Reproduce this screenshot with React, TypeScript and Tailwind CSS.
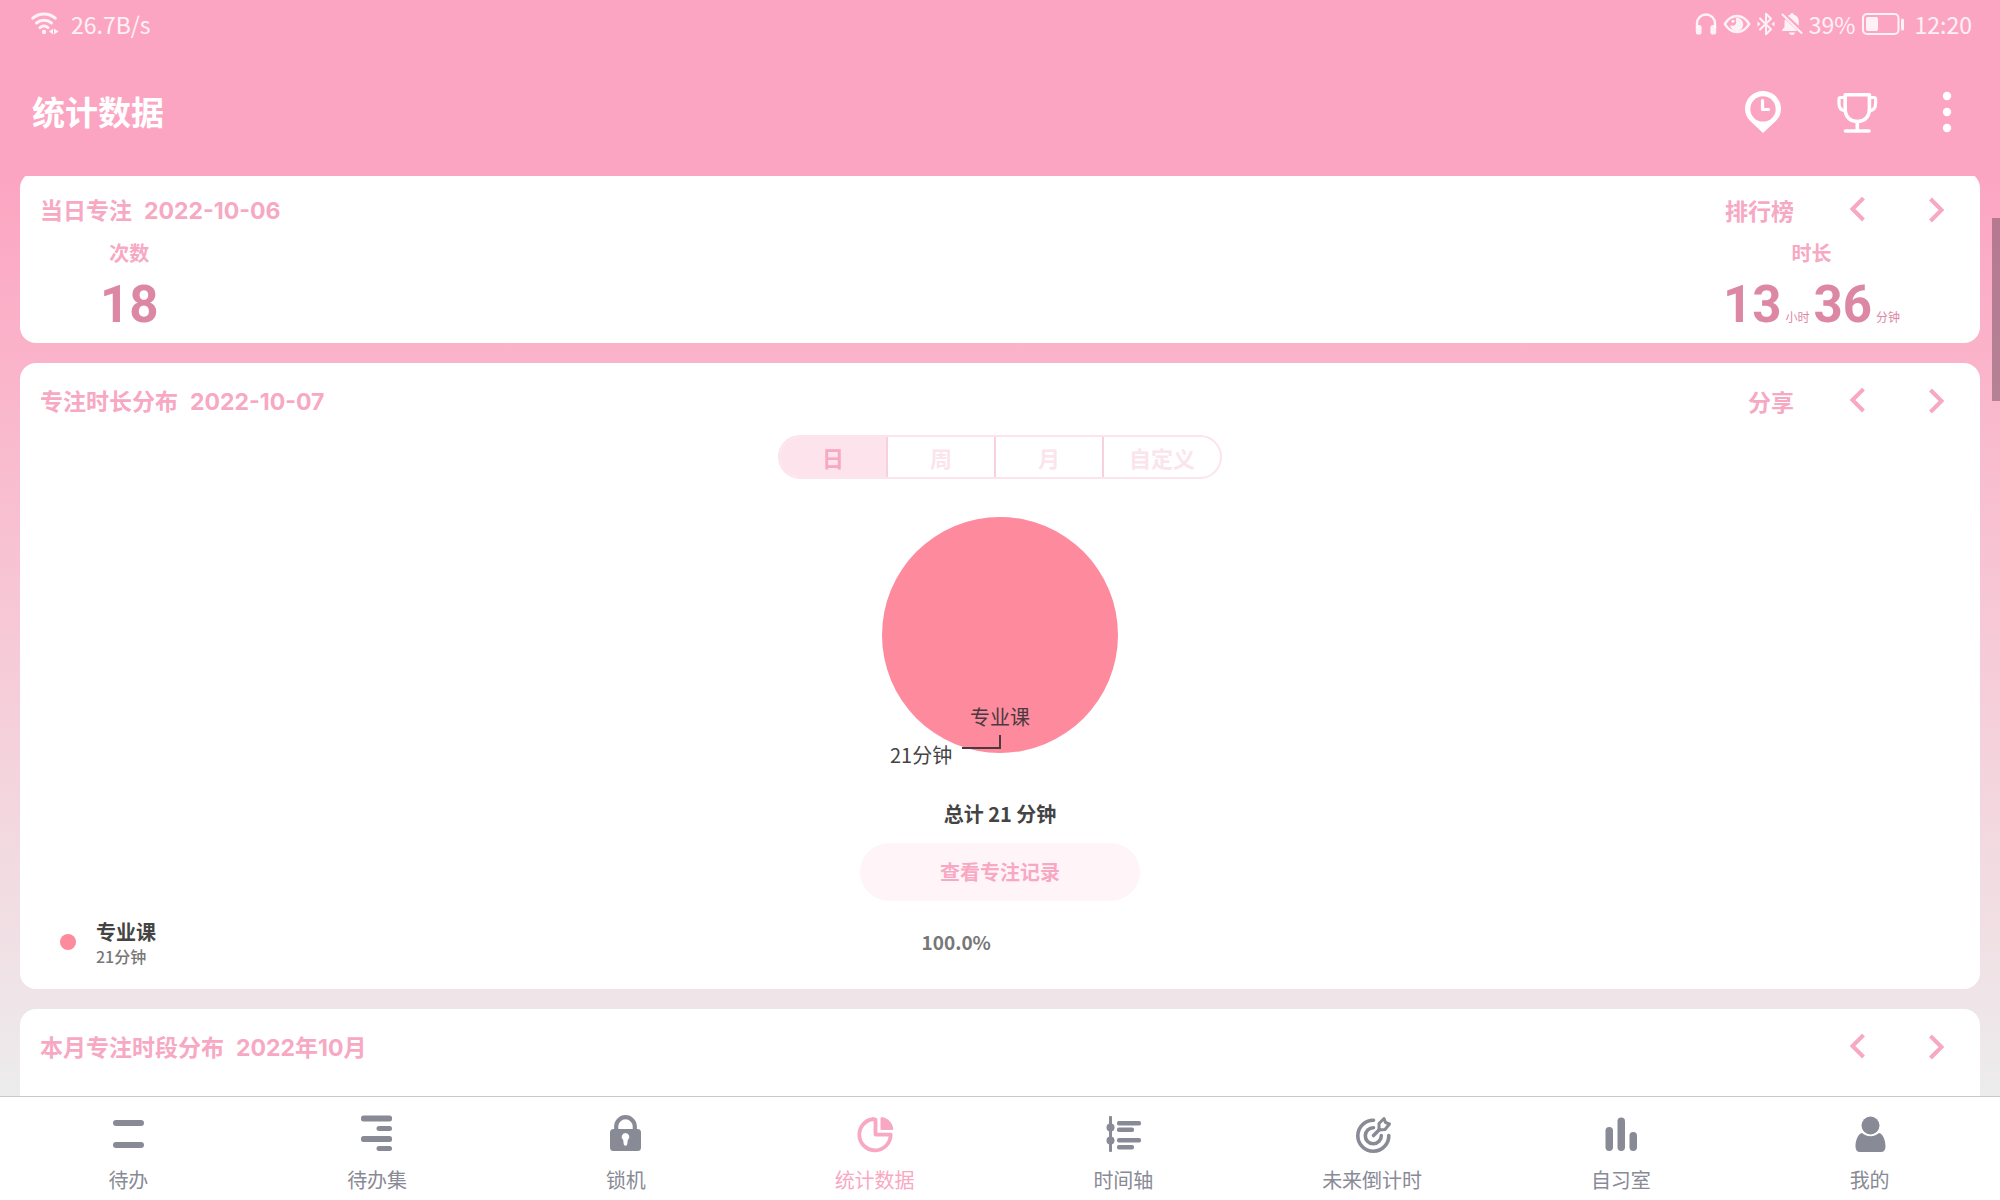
import type { ReactNode } from "react";

function WifiIcon() {
  return (
    <svg width="28" height="24" viewBox="0 0 28 24" fill="none" stroke="currentColor" strokeWidth="3" strokeLinecap="round" aria-hidden="true">
      <path d="M1.800 6.200C8.500 0.700 17.500 0.700 24.200 6.200" />
      <path d="M5.500 11C10 7.300 16 7.300 20.500 11" />
      <path d="M9 15.600C11.500 13.600 14.500 13.600 17 15.600" />
      <circle cx="13" cy="20" r="2.200" fill="currentColor" stroke="none" />
      <path d="M18 19.500l4-3v6zM23 16.500l4.500 3-4.500 3z" fill="currentColor" stroke="none" />
    </svg>
  );
}

function HeadphonesIcon() {
  return (
    <svg width="22" height="24" viewBox="0 0 22 24" aria-hidden="true">
      <path d="M2 16v-4.500a9 9 0 0 1 18 0V16" fill="none" stroke="currentColor" strokeWidth="2.400" />
      <rect x="0.800" y="13" width="5.800" height="9.500" rx="2.600" fill="currentColor" />
      <rect x="15.400" y="13" width="5.800" height="9.500" rx="2.600" fill="currentColor" />
    </svg>
  );
}

function EyeIcon() {
  return (
    <svg width="28" height="24" viewBox="0 0 28 24" aria-hidden="true">
      <path d="M1.800 12C5 6.800 9 4 14 4s9 2.800 12.200 8C23 17.200 19 20 14 20S5 17.200 1.800 12z" fill="none" stroke="currentColor" strokeWidth="2.400" strokeLinejoin="round" />
      <path d="M13 5.800a6.600 6.600 0 1 1-5.900 7.300c2 1.500 5.600.4 6-2.200.2-1.700-.6-3-.1-5.100z" fill="currentColor" />
      <circle cx="10" cy="9.200" r="1.500" fill="currentColor" />
    </svg>
  );
}

function BluetoothIcon() {
  return (
    <svg width="18" height="24" viewBox="0 0 18 24" aria-hidden="true">
      <path d="M3 6.500l11 10.800-5 5V1.700l5 5L3 17.500" fill="none" stroke="currentColor" strokeWidth="2" strokeLinejoin="round" strokeLinecap="round" />
      <path d="M.5 9.500L3.500 12l-3 2.500zM17.500 9.500L14.500 12l3 2.500z" fill="currentColor" />
    </svg>
  );
}

function BellOffIcon() {
  return (
    <svg width="22" height="24" viewBox="0 0 22 24" aria-hidden="true">
      <path d="M4.200 7.200L16.500 19H1.800c-.8 0-1-.8-.5-1.300l2.200-2.600V10c0-1 .3-2 .7-2.800zM7 3.800c.7-.5 1.500-.9 2.300-1C9.500 1.800 10 1 11 1s1.600.8 1.800 1.800c3 .7 5 3.300 5 6.700v4.300z" fill="currentColor" />
      <path d="M8 20.500h6c0 1.500-1.400 2.500-3 2.500s-3-1-3-2.500z" fill="currentColor" />
      <path d="M1.500 2.500l19 18.500" stroke="currentColor" strokeWidth="2" strokeLinecap="round" />
    </svg>
  );
}

function BatteryIcon() {
  return (
    <svg width="43" height="24" viewBox="0 0 43 24" aria-hidden="true">
      <rect x="1" y="2" width="35.500" height="20" rx="4" fill="none" stroke="currentColor" strokeWidth="2" />
      <rect x="4" y="5" width="12" height="14" rx="2" fill="currentColor" />
      <rect x="39" y="6.500" width="3" height="12" rx="1.500" fill="currentColor" />
    </svg>
  );
}

function FocusPinIcon() {
  return (
    <svg width="44" height="44" viewBox="0 0 44 44" aria-hidden="true">
      <path fillRule="evenodd" d="M22 1C12 1 4 9 4 18.800c0 5 2 9 5.200 12.200L22 43l12.800-12C38 27.800 40 23.800 40 18.800 40 9 32 1 22 1zm0 5.200a12.700 12.700 0 1 1 0 25.400 12.700 12.700 0 0 1 0-25.400z" fill="currentColor" />
      <path d="M21.500 10.500v9h6" fill="none" stroke="currentColor" strokeWidth="3.200" strokeLinecap="round" strokeLinejoin="round" />
    </svg>
  );
}

function TrophyIcon() {
  return (
    <svg width="44" height="44" viewBox="0 0 44 44" fill="none" stroke="currentColor" strokeWidth="3.600" strokeLinecap="round" strokeLinejoin="round" aria-hidden="true">
      <path d="M9.200 4.800h24.200v14.500c0 7.500-5 12.200-12.100 12.200s-12.100-4.700-12.100-12.200z" />
      <path d="M9.200 7.500H4.800c-1 0-1.800.8-1.800 1.800v4c0 4.500 2 7.200 6.200 7.500M33.400 7.500h4.400c1 0 1.800.8 1.800 1.800v4c0 4.500-2 7.200-6.200 7.500" strokeWidth="3.200" />
      <path d="M21.300 31.500V41M9.500 41h23.500" />
    </svg>
  );
}

function MoreIcon() {
  return (
    <svg width="12" height="44" viewBox="0 0 12 44" fill="currentColor" aria-hidden="true">
      <circle cx="6" cy="6" r="4.200" />
      <circle cx="6" cy="22" r="4.200" />
      <circle cx="6" cy="38" r="4.200" />
    </svg>
  );
}

function Chevron({ direction }: { direction: "left" | "right" }) {
  return (
    <svg width="16" height="26" viewBox="0 0 16 26" fill="none" stroke="currentColor" strokeWidth="4" aria-hidden="true">
      {direction === "left" ? <path d="M14.500 1L3.500 12 14.500 23" /> : <path d="M1.500 2L12.500 13 1.500 24" />}
    </svg>
  );
}

const navIcons: Record<string, ReactNode> = {
  待办: (
    <g fill="currentColor">
      <rect x="5" y="5" width="31" height="6" rx="3" />
      <rect x="5" y="27" width="31" height="6" rx="3" />
    </g>
  ),
  待办集: (
    <g fill="currentColor">
      <rect x="4" y="0.500" width="31" height="6" rx="2.500" />
      <rect x="19.500" y="11" width="15.500" height="5" rx="2.500" />
      <rect x="4" y="21" width="31" height="6" rx="2.500" />
      <rect x="19.500" y="31" width="15.500" height="5" rx="2.500" />
    </g>
  ),
  锁机: (
    <g>
      <path d="M10.200 16v-4.500a9.300 9.300 0 0 1 18.600 0V16" fill="none" stroke="currentColor" strokeWidth="4.200" />
      <path fillRule="evenodd" d="M7.500 14h24a3.500 3.500 0 0 1 3.500 3.500v15a3.500 3.500 0 0 1-3.500 3.500h-24A3.500 3.500 0 0 1 4 32.500v-15A3.500 3.500 0 0 1 7.500 14zm12 4a3.900 3.900 0 0 0-2.300 7l.5 4a1.800 1.800 0 0 0 3.600 0l.5-4a3.900 3.900 0 0 0-2.300-7z" fill="currentColor" />
    </g>
  ),
  统计数据: (
    <g>
      <path d="M18.500 4a15.700 15.700 0 1 0 17.200 15.600H20.500V4.500z" fill="none" stroke="currentColor" strokeWidth="3.800" strokeLinejoin="round" />
      <path d="M25.500 3.500a1.500 1.500 0 0 1 1.500-1.500C33 3 37.300 7.500 38.200 13.500c0 1-.5 1.500-1.200 1.500H26.500a1 1 0 0 1-1-1z" fill="currentColor" />
    </g>
  ),
  时间轴: (
    <g fill="currentColor">
      <rect x="6" y="1" width="3" height="36" rx="1" />
      <circle cx="7.500" cy="12.500" r="4" />
      <circle cx="7.500" cy="25.500" r="4" />
      <rect x="14" y="6" width="24" height="4.500" rx="1.800" />
      <rect x="14" y="12.500" width="17" height="4.500" rx="1.800" />
      <rect x="14" y="23" width="24" height="4.500" rx="1.800" />
      <rect x="14" y="30" width="17" height="4.500" rx="1.800" />
    </g>
  ),
  未来倒计时: (
    <g fill="none" stroke="currentColor" strokeWidth="3.600" strokeLinecap="round" strokeLinejoin="round">
      <path d="M21.500 5.300a15.500 15.500 0 1 0 15.300 15.200" />
      <path d="M21.500 12.800a8 8 0 1 0 7.800 7.800" />
      <path d="M21.500 20.500l6-6" />
      <path d="M27 15v-6.500l5-5 1.500 4 4 1.500-4.500 5.500z" strokeWidth="3" />
    </g>
  ),
  自习室: (
    <g fill="currentColor">
      <rect x="4.500" y="12" width="7.500" height="24" rx="3.700" />
      <rect x="16.500" y="2.500" width="7.500" height="33.500" rx="3.700" />
      <rect x="28.500" y="17" width="7.500" height="19" rx="3.700" />
    </g>
  ),
  我的: (
    <g fill="currentColor">
      <path d="M12 18c2.200 2 5 3.200 8.500 3.200s6.300-1.200 8.500-3.200C33 19 35.500 25 35.500 31.500c0 3.500-1.500 5.500-4.500 5.500H10C7 37 5.500 35 5.500 31.500 5.500 25 8 19 12 18z" />
      <circle cx="20.500" cy="10.500" r="9" />
    </g>
  ),
};

const tabs = ["待办", "待办集", "锁机", "统计数据", "时间轴", "未来倒计时", "自习室", "我的"];
const ranges = ["日", "周", "月", "自定义"];

function CardHeader({ title, date, action }: { title: string; date: string; action?: string }) {
  return (
    <div className="flex h-8 items-center justify-between pr-[35px] pl-5 text-[23px] font-bold text-[#f7a8c3]">
      <h2>
        {title}
        <span className="ml-3 font-[Inter,'Noto_Sans_CJK_SC',sans-serif]">{date}</span>
      </h2>
      <div className="flex items-center">
        {action && <button type="button">{action}</button>}
        <button type="button" aria-label="上一个" className="ml-[55px]">
          <Chevron direction="left" />
        </button>
        <button type="button" aria-label="下一个" className="ml-16">
          <Chevron direction="right" />
        </button>
      </div>
    </div>
  );
}

export default function App() {
  return (
    <div className="flex h-screen flex-col overflow-hidden bg-[#fca5c2] font-['Noto_Sans_CJK_SC',sans-serif]">
      <div className="flex h-12 shrink-0 items-center justify-between pr-7 pl-[31px] text-[23px] text-white/85">
        <div className="flex items-center gap-3">
          <WifiIcon />
          <span>26.7B/s</span>
        </div>
        <div className="flex items-center">
          <div className="flex items-center gap-[6px]">
            <HeadphonesIcon />
            <EyeIcon />
            <BluetoothIcon />
            <BellOffIcon />
            <span>39%</span>
            <BatteryIcon />
          </div>
          <span className="ml-[10px]">12:20</span>
        </div>
      </div>

      <header className="flex h-32 shrink-0 items-center justify-between pr-[47px] pl-8 text-white">
        <h1 className="text-[33px] font-bold">统计数据</h1>
        <div className="flex items-center">
          <button type="button" aria-label="专注足迹">
            <FocusPinIcon />
          </button>
          <button type="button" aria-label="成就" className="ml-[51px]">
            <TrophyIcon />
          </button>
          <button type="button" aria-label="更多" className="ml-[61px]">
            <MoreIcon />
          </button>
        </div>
      </header>

      <main className="relative min-h-0 flex-1 overflow-hidden bg-linear-to-b from-[#fca5c2] to-[#ececec]">
        <div className="-mt-1 flex flex-col gap-5 px-5">
          <section className="rounded-2xl bg-white pt-[22px] pb-3">
            <CardHeader title="当日专注" date="2022-10-06" action="排行榜" />
            <div className="mt-[13px] flex justify-between px-20 text-[#dc88a5]">
              <div className="flex flex-col items-center">
                <span className="text-[20px] leading-7 font-bold text-[#f7a8c3]">次数</span>
                <span className="mt-[11px] font-[Roboto,sans-serif] text-[51px] leading-[53px] font-bold">18</span>
              </div>
              <div className="flex flex-col items-center">
                <span className="text-[20px] leading-7 font-bold text-[#f7a8c3]">时长</span>
                <div className="mt-[11px] flex items-baseline">
                  <span className="font-[Roboto,sans-serif] text-[51px] leading-[53px] font-bold">13</span>
                  <span className="mx-1 text-[12px] leading-4">小时</span>
                  <span className="font-[Roboto,sans-serif] text-[51px] leading-[53px] font-bold">36</span>
                  <span className="ml-1 text-[12px] leading-4">分钟</span>
                </div>
              </div>
            </div>
          </section>

          <section className="flex flex-col rounded-2xl bg-white pt-[22px] pb-[23px]">
            <CardHeader title="专注时长分布" date="2022-10-07" action="分享" />
            <div role="group" aria-label="时间范围" className="mt-[18px] flex h-11 self-center overflow-hidden rounded-full border-2 border-[#fce4ec] text-[22px] font-bold text-[#fce4ec]">
              {ranges.map((range, index) => (
                <button
                  key={range}
                  type="button"
                  aria-pressed={index === 0}
                  className={
                    index === 0
                      ? "w-[108px] border-r-2 border-[#f9d0de] bg-[#fde4ec] text-[#f7a8c3]"
                      : index === 3
                        ? "w-[116px]"
                        : "w-[108px] border-r-2 border-[#f9d0de]"
                  }
                >
                  {range}
                </button>
              ))}
            </div>
            <svg width="240" height="260" viewBox="0 0 240 260" className="mt-9 self-center" role="img" aria-label="专业课 21分钟">
              <circle cx="120" cy="120" r="118" fill="#fd8b9d" />
              <path d="M120 220v13H82" fill="none" stroke="#4a3a40" strokeWidth="2" />
              <text x="120" y="210" textAnchor="middle" fontSize="20" fill="#4a3a40">专业课</text>
              <text x="10" y="248" fontSize="20" fill="#444444">21分钟</text>
            </svg>
            <p className="mt-[25px] self-center text-[20px] leading-7 font-bold text-[#444444]">总计 21 分钟</p>
            <button type="button" className="mt-[15px] h-[58px] w-[280px] self-center rounded-full bg-[#fff5f9] text-[20px] font-bold text-[#f9a8c4]">
              查看专注记录
            </button>
            <div className="mt-[17px] flex items-center">
              <div className="flex w-[46%] items-center gap-5 pl-10">
                <span className="size-4 rounded-full bg-[#fd8b9d]" />
                <div className="text-[#444444]">
                  <p className="text-[20px] leading-7 font-bold">专业课</p>
                  <p className="text-[16px] leading-5 font-medium text-[#777777]">21分钟</p>
                </div>
              </div>
              <span className="text-[19px] font-bold text-[#777777]">100.0%</span>
            </div>
          </section>

          <section className="h-60 rounded-2xl bg-white pt-[22px]">
            <CardHeader title="本月专注时段分布" date="2022年10月" />
          </section>
        </div>
        <div className="absolute top-[42px] right-0 h-[183px] w-2 bg-[#5f4052]/45" />
      </main>

      <nav className="flex h-[104px] shrink-0 border-t border-[#c8c8c8] bg-white pt-[18px] pr-1.5 pl-1 text-[#888a96]">
        {tabs.map((tab) => (
          <a
            key={tab}
            href="#"
            aria-current={tab === "统计数据" ? "page" : undefined}
            className={
              tab === "统计数据"
                ? "flex flex-1 flex-col items-center text-[#f9a8c4]"
                : "flex flex-1 flex-col items-center"
            }
          >
            <svg width="40" height="40" viewBox="0 0 40 40" aria-hidden="true">
              {navIcons[tab]}
            </svg>
            <span className="mt-[11px] text-[20px] leading-7">{tab}</span>
          </a>
        ))}
      </nav>
    </div>
  );
}
